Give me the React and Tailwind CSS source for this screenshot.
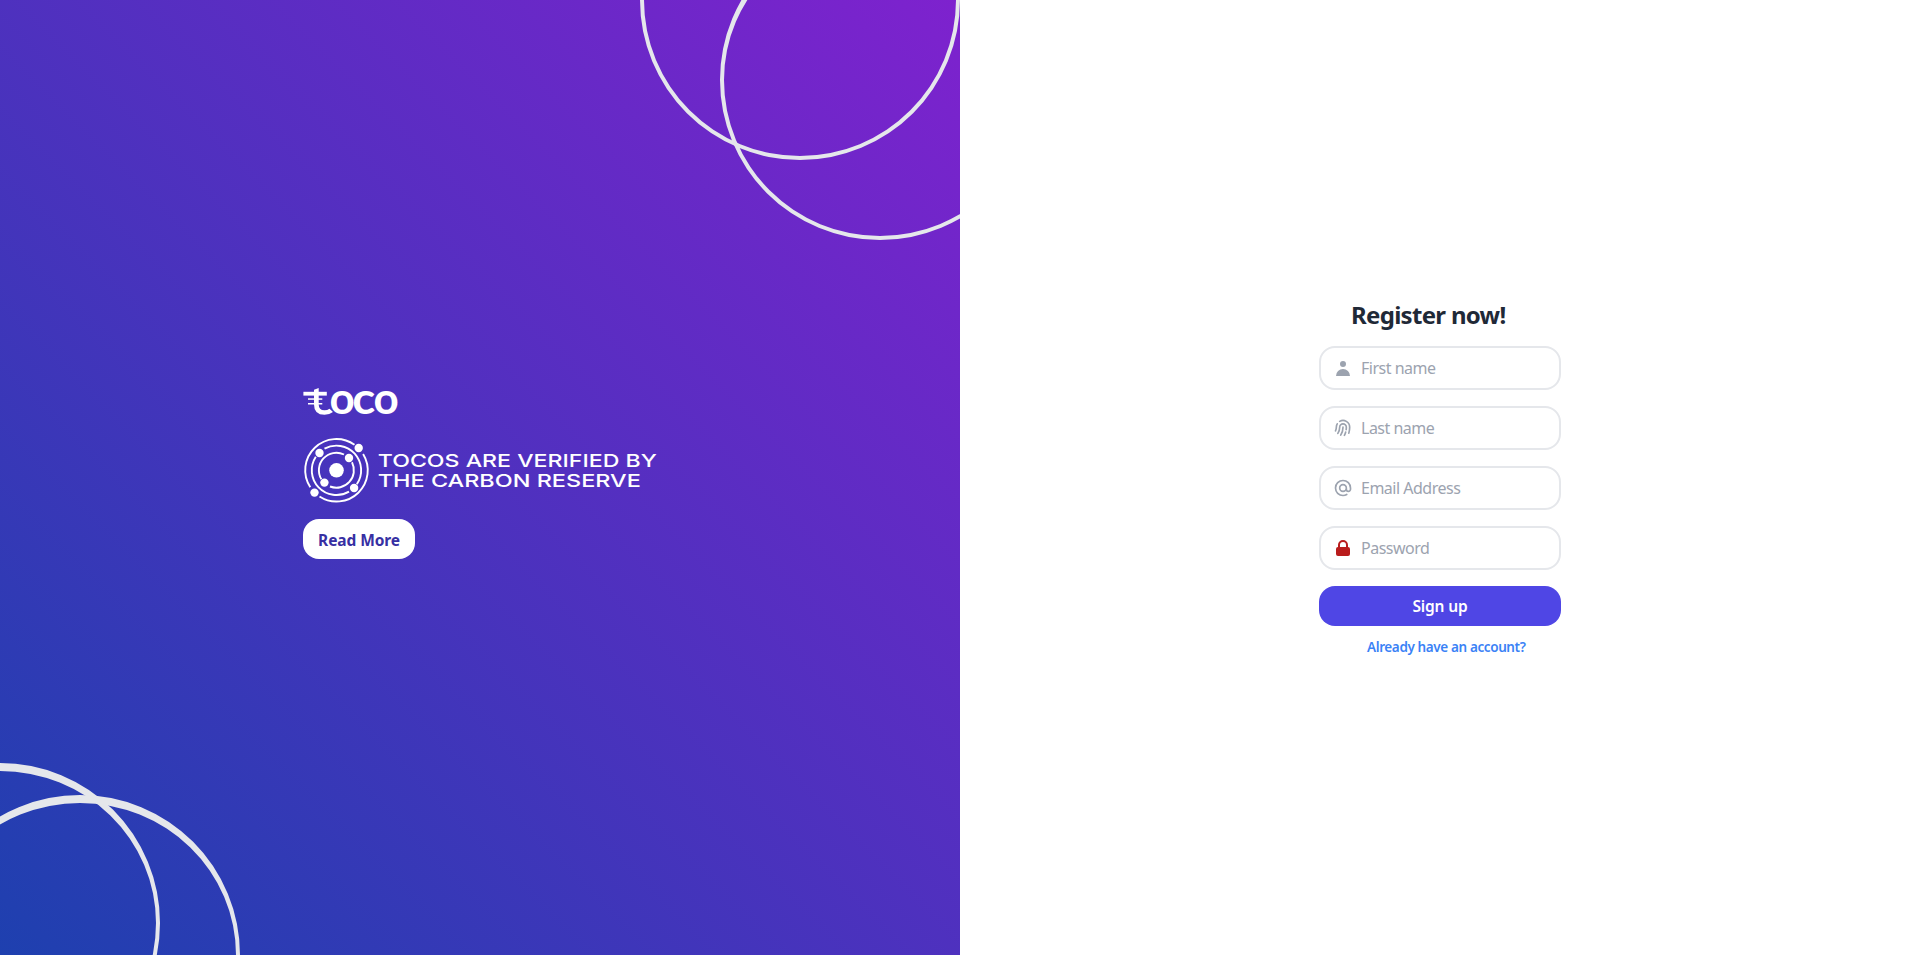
const outline = { fill: 'none', stroke: 'currentColor', strokeWidth: 2, strokeLinecap: 'round', strokeLinejoin: 'round' };

const fields = [
  {
    label: 'First name',
    type: 'text',
    icon: (
      <svg className="h-5 w-5 shrink-0 text-[#9ca3af]" viewBox="0 0 20 20" fill="currentColor">
        <path fillRule="evenodd" d="M10 9a3 3 0 100-6 3 3 0 000 6zm-7 9a7 7 0 1114 0H3z" clipRule="evenodd" />
      </svg>
    ),
  },
  {
    label: 'Last name',
    type: 'text',
    icon: (
      <svg className="h-5 w-5 shrink-0 text-[#9ca3af]" viewBox="0 0 24 24" {...outline}>
        <path d="M12 11c0 3.517-1.009 6.799-2.753 9.571m-3.44-2.04l.054-.09A13.916 13.916 0 008 11a4 4 0 118 0c0 1.017-.07 2.019-.203 3m-2.118 6.844A21.88 21.88 0 0015.171 17m3.839 1.132c.645-2.266.99-4.659.99-7.132A8 8 0 008 4.07M3 15.364c.64-1.319 1-2.8 1-4.364 0-1.457.39-2.823 1.07-4" />
      </svg>
    ),
  },
  {
    label: 'Email Address',
    type: 'text',
    icon: (
      <svg className="h-5 w-5 shrink-0 text-[#9ca3af]" viewBox="0 0 24 24" {...outline}>
        <path d="M16 12a4 4 0 10-8 0 4 4 0 008 0zm0 0v1.5a2.5 2.5 0 005 0V12a9 9 0 10-9 9m4.5-1.206a8.959 8.959 0 01-4.5 1.207" />
      </svg>
    ),
  },
  {
    label: 'Password',
    type: 'password',
    icon: (
      <svg className="h-5 w-5 shrink-0 text-[#b91c1c]" viewBox="0 0 20 20" fill="currentColor">
        <path fillRule="evenodd" d="M5 9V7a5 5 0 0110 0v2a2 2 0 012 2v5a2 2 0 01-2 2H5a2 2 0 01-2-2v-5a2 2 0 012-2zm8-2v2H7V7a3 3 0 016 0z" clipRule="evenodd" />
      </svg>
    ),
  },
];

function TocoLogo() {
  return (
    <svg className="block h-[28px] w-[98px] overflow-visible text-white" viewBox="0 0 98 28" fill="currentColor">
      <rect x="0.4" y="3.8" width="23.400" height="3.8" />
      <path d="M11 1.800L15.700 0V16.500q0 5.800 5.800 5.800 2.800 0 5-1.600l3.500 3.200Q26 26.800 21.500 26.800 11 26.800 11 16.500z" />
      <rect x="5" y="10.300" width="14.300" height="1.500" />
      <rect x="5" y="15" width="14.300" height="1.500" />
      <g fontFamily="Lato, sans-serif" fontWeight="700" fontSize="43">
        <text x="26.400" y="26" textLength="25.300" lengthAdjust="spacingAndGlyphs">o</text>
        <text x="49.300" y="26" textLength="23" lengthAdjust="spacingAndGlyphs">c</text>
        <text x="70.600" y="26" textLength="25.300" lengthAdjust="spacingAndGlyphs">o</text>
      </g>
    </svg>
  );
}

function CarbonReserve() {
  return (
    <svg className="block h-[72px] w-[354px] text-white" viewBox="0 0 354 72" fill="currentColor">
      <g transform="translate(33.500 36.300)">
        <circle r="7.300" />
        <g fill="none" stroke="currentColor" strokeWidth="1.900">
          <path d="M18-25.500A31.200 31.200 0 0 0-26.200 17" />
          <path d="M26.600-16.300A31.200 31.200 0 0 1-17 26.200" />
          <path d="M-12-21.600A24.700 24.700 0 0 1 20.300 14" />
          <path d="M-20.700-13.500A24.700 24.700 0 0 0 12.500 21.300" />
          <path d="M7.500-15.800A17.500 17.500 0 0 0-15.100 9" />
          <path d="M15.500-8A17.500 17.500 0 0 1-6.500 16.200" />
        </g>
        <circle cx="22.200" cy="-22.300" r="4.200" />
        <circle cx="-17" cy="-17.300" r="4.200" />
        <circle cx="12.500" cy="-12.300" r="4.200" />
        <circle cx="-12.100" cy="12.300" r="4.200" />
        <circle cx="17.600" cy="17.700" r="4.200" />
        <circle cx="-22" cy="22.300" r="4.200" />
      </g>
      <g fontFamily="Inter, sans-serif" fontWeight="500" fontSize="17.800">
        <text x="74.800" y="33" textLength="279" lengthAdjust="spacingAndGlyphs">TOCOS ARE VERIFIED BY</text>
        <text x="74.800" y="52.700" textLength="263" lengthAdjust="spacingAndGlyphs">THE CARBON RESERVE</text>
      </g>
    </svg>
  );
}

export default function App() {
  return (
    <div className="flex h-screen overflow-hidden bg-white font-['Noto_Sans',sans-serif]">
      <div className="relative flex w-1/2 items-center justify-center overflow-hidden bg-[linear-gradient(to_top_right,#1e40af,#7e22ce)]">
        <div className="flex w-[354px] flex-col items-start">
          <TocoLogo />
          <div className="mt-[18px]">
            <CarbonReserve />
          </div>
          <button className="mt-[13px] mb-2 flex h-10 w-28 items-center justify-center rounded-2xl bg-white pt-[3px] text-[15.500px] font-bold tracking-[-0.1px] whitespace-nowrap text-[#3730a3]">
            Read More
          </button>
        </div>
        <div className="absolute -bottom-32 -left-40 h-80 w-80 rounded-full border-4 border-t-8 border-[#e5e7eb]" />
        <div className="absolute -bottom-40 -left-20 h-80 w-80 rounded-full border-4 border-t-8 border-[#e5e7eb]" />
        <div className="absolute -top-40 right-0 h-80 w-80 rounded-full border-4 border-t-8 border-[#e5e7eb]" />
        <div className="absolute -top-20 -right-20 h-80 w-80 rounded-full border-4 border-t-8 border-[#e5e7eb]" />
      </div>

      <div className="flex w-1/2 items-center justify-center bg-white">
        <form className="flex w-[242px] flex-col pt-px">
          <h1 className="mb-[15px] pl-8 text-2xl font-bold tracking-[-0.7px] whitespace-nowrap text-[#1f2937]">Register now!</h1>
          {fields.map((field) => (
            <label key={field.label} className="mb-4 flex h-11 items-center rounded-2xl border-2 border-[#e5e7eb] px-3">
              {field.icon}
              <input
                type={field.type}
                placeholder={field.label}
                className="w-full min-w-0 border-none pl-2 text-base tracking-[-0.5px] outline-none placeholder:text-[#9ca3af]"
              />
            </label>
          ))}
          <button type="button" className="h-10 rounded-2xl bg-[#4f46e5] pt-px text-[15.500px] font-semibold tracking-[-0.15px] text-white">
            Sign up
          </button>
          <a href="#" className="mt-[11px] ml-12 text-[13.500px] leading-5 font-semibold tracking-[-0.38px] whitespace-nowrap text-[#3b82f6]">
            Already have an account?
          </a>
        </form>
      </div>
    </div>
  );
}
